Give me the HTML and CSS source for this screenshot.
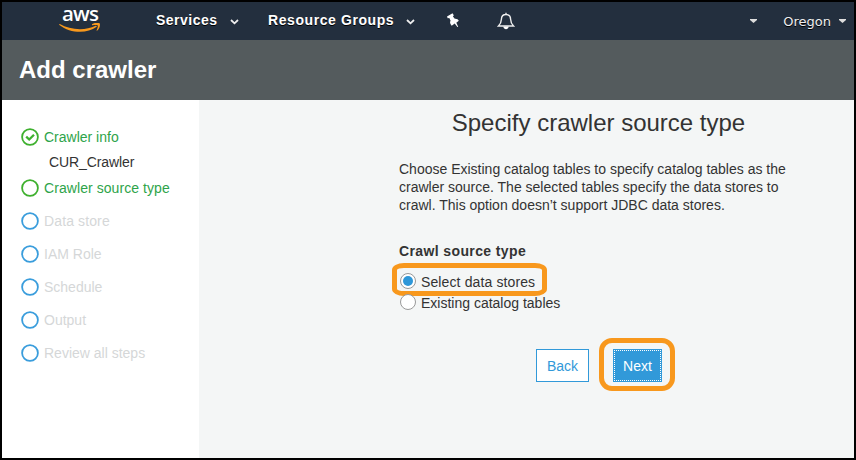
FILE: index.html
```html
<!DOCTYPE html>
<html lang="en">
<head>
<meta charset="utf-8">
<title>Add crawler</title>
<link rel="stylesheet" href="styles.css">
</head>
<body>
<div class="window">
  <nav class="nav">
    <div class="logo">
      <span class="logo-text">aws</span>
      <svg class="smile" width="42" height="11" viewBox="0 0 42 11"><path d="M.8 1C11 7 26 8 36.600 2.800c1-.4 1.700.6.800 1.300C28 11 11 10.500.4 2 .1 1.500.3.8.8 1z" fill="#f7981d"/><path d="M33.300 1c2.500-1.600 6.200-1.500 7.500-.6.600 2-.300 5.400-2.400 7.200-.6.400-.9 0-.7-.5.700-1.700 1.500-3.700 1-4.600-.7-.8-3.400-.5-5.200-.3-.6 0-.8-.7-.2-1.200z" fill="#f7981d"/></svg>
    </div>
    <a class="nav-link services">Services</a>
    <svg class="chev" width="9" height="6" viewBox="0 0 9 6"><path d="M1 1l3.500 3.300L8 1" fill="none" stroke="#eee" stroke-width="1.800"/></svg>
    <a class="nav-link groups">Resource Groups</a>
    <svg class="chev" width="9" height="6" viewBox="0 0 9 6"><path d="M1 1l3.500 3.300L8 1" fill="none" stroke="#eee" stroke-width="1.800"/></svg>
    <svg class="pin" width="14" height="15" viewBox="0 0 14 15"><path d="M1 3.500L6.500.3l1.300 1.900-.9 1.200 1.900 2.400c1.700-.3 3.400.6 4 2L10.300 9.700l1.900 4-.8.400-2.700-3.600-3 2.200C4 10.700 3.600 9 4.600 7.700L3.300 5l-1.600.3z" fill="#fff"/></svg>
    <svg class="bell" width="18" height="18" viewBox="0 0 18 18"><path d="M9 2.500c-3 0-4.500 2-4.600 4.800C4.300 10.500 3.500 12 1.500 14h15c-2-2-2.800-3.500-2.900-6.700C13.500 4.500 12 2.500 9 2.500zM9 .8v2" fill="none" stroke="#eee" stroke-width="1.400"/><path d="M6.300 14.500h5.400C11.300 18 6.700 18 6.300 14.500z" fill="#fff"/></svg>
    <svg class="caret account" width="7" height="4" viewBox="0 0 7 4"><path d="M0 0h7v1L3.500 4 0 1z" fill="#ddd"/></svg>
    <span class="region">Oregon</span>
    <svg class="caret" width="7" height="4" viewBox="0 0 7 4"><path d="M0 0h7v1L3.500 4 0 1z" fill="#ddd"/></svg>
  </nav>
  <header class="title-bar"><h1>Add crawler</h1></header>
  <div class="body">
    <ul class="steps">
      <li class="step done"><svg class="dot" width="18" height="18" viewBox="0 0 18 18"><circle cx="9" cy="9" r="7.900"/><path class="tick" d="M5.200 8.700l3 2.800 4.800-4.800"/></svg>Crawler info</li>
      <li class="detail">CUR_Crawler</li>
      <li class="step done current"><svg class="dot" width="18" height="18" viewBox="0 0 18 18"><circle cx="9" cy="9" r="7.900"/></svg>Crawler source type</li>
      <li class="step"><svg class="dot" width="18" height="18" viewBox="0 0 18 18"><circle cx="9" cy="9" r="7.900"/></svg><span class="wide">Data store</span></li>
      <li class="step"><svg class="dot" width="18" height="18" viewBox="0 0 18 18"><circle cx="9" cy="9" r="7.900"/></svg>IAM Role</li>
      <li class="step"><svg class="dot" width="18" height="18" viewBox="0 0 18 18"><circle cx="9" cy="9" r="7.900"/></svg>Schedule</li>
      <li class="step"><svg class="dot" width="18" height="18" viewBox="0 0 18 18"><circle cx="9" cy="9" r="7.900"/></svg>Output</li>
      <li class="step"><svg class="dot" width="18" height="18" viewBox="0 0 18 18"><circle cx="9" cy="9" r="7.900"/></svg>Review all steps</li>
    </ul>
    <main class="main">
      <h2>Specify crawler source type</h2>
      <p class="intro">Choose Existing catalog tables to specify catalog tables as the<br>crawler source. The selected tables specify the data stores to<br>crawl. This option doesn’t support JDBC data stores.</p>
      <h3>Crawl source type</h3>
      <div class="option selected"><span class="radio checked"></span>Select data stores<span class="mark mark-option"></span></div>
      <div class="option"><span class="radio"></span>Existing catalog tables</div>
      <div class="actions">
        <button class="btn back">Back</button>
        <div class="next-wrap"><button class="btn next">Next</button><span class="mark mark-next"></span></div>
      </div>
    </main>
  </div>
</div>
</body>
</html>
```
FILE: styles.css
```css
* { box-sizing: border-box; }
body { margin: 0; font: 14px/18px "Liberation Sans", Arial, sans-serif; color: #333; }
h1, h2, h3, p, ul { margin: 0; padding: 0; }
.window { width: 856px; height: 460px; border: 2px solid #000; display: flex; flex-direction: column; }
.nav { height: 38px; flex: none; background: #232f3e; display: flex; align-items: center; padding: 0 8px 2px 57px; }
.logo { width: 42px; height: 34px; margin-top: -2px; display: flex; flex-direction: column; align-items: center; }
.logo-text { color: #fff; font: 600 20.5px/22px "Open Sans", sans-serif; height: 20px; letter-spacing: -0.8px; }
.smile { display: block; margin-top: 1px; }
.nav-link { color: #fff; font-size: 14px; font-weight: bold; letter-spacing: 0.5px; text-shadow: 0 1px 0 #000; white-space: nowrap; }
.services { margin-left: 55px; width: 74px; }
.groups { margin-left: 29px; width: 138px; letter-spacing: 0.58px; }
.chev { flex: none; margin-top: 4px; }
.pin { margin-left: 31px; }
.bell { margin: 1px 0 0 37px; }
.account { margin-left: auto; }
.caret { flex: none; margin-top: 2px; }
.region { font: 13px/18px "DejaVu Sans", Verdana, sans-serif; color: #eee; text-shadow: 0 1px 0 #000; margin: 3px 8px 0 26px; }
.title-bar { height: 60px; flex: none; background: #545b5d; display: flex; align-items: center; padding-left: 17px; }
h1 { font-size: 24px; line-height: 28px; color: #fff; }
.body { flex: 1; display: flex; min-height: 0; }
.steps { width: 197px; background: #fff; list-style: none; padding: 28px 0 0 19px; }
.step { display: flex; align-items: center; height: 18px; gap: 5px; margin-bottom: 15px; color: #d5d7d8; }
.step.done:first-child { margin-bottom: 7px; }
.step.done { color: #2ea44a; }
.current { letter-spacing: 0.07px; }
.wide { letter-spacing: 0.12px; }
.detail { margin: 0 0 8px 28px; height: 18px; letter-spacing: -0.1px; }
.dot { fill: none; stroke: #3a9ddc; stroke-width: 1.8; }
.done .dot { stroke: #3eb02e; }
.done .tick { stroke-width: 2.3; }
.main { flex: 1; background: #f4f6f6; padding: 8px 0 0 200px; }
h2 { font-size: 24px; line-height: 30px; font-weight: normal; width: 399px; text-align: center; }
.intro { margin-top: 22px; }
h3 { font-size: 14px; line-height: 18px; margin-top: 28px; letter-spacing: 0.38px; }
.option { position: relative; display: flex; align-items: center; height: 21px; gap: 5px; }
.selected { letter-spacing: 0.12px; }
h3 + .option { margin-top: 11px; }
.radio { width: 16px; height: 16px; margin: 0 0 2px 1px; border: 1px solid #999; border-radius: 50%; background: #fff; display: flex; align-items: center; justify-content: center; }
.checked::after { content: ""; width: 10px; height: 10px; border-radius: 50%; background: #2e97d8; }
.mark { position: absolute; border: 5px solid #f8981d; pointer-events: none; }
.mark-option { left: -7px; top: -8px; width: 155px; height: 33px; border-radius: 12px / 7px; }
.actions { display: flex; margin: 36px 0 0 137px; gap: 24px; }
.btn { font: 14px/18px "Liberation Sans", Arial, sans-serif; height: 33px; padding: 0; border: 1px solid #3199d9; background: #fff; color: #3199d9; display: block; }
.back { width: 53px; }
.next-wrap { position: relative; }
.next { width: 49px; background: #3199d9; color: #fff; outline: 1px dotted #fff; outline-offset: -2px; }
.mark-next { left: -14px; top: -11px; width: 76px; height: 53px; border-radius: 13px; }
```
